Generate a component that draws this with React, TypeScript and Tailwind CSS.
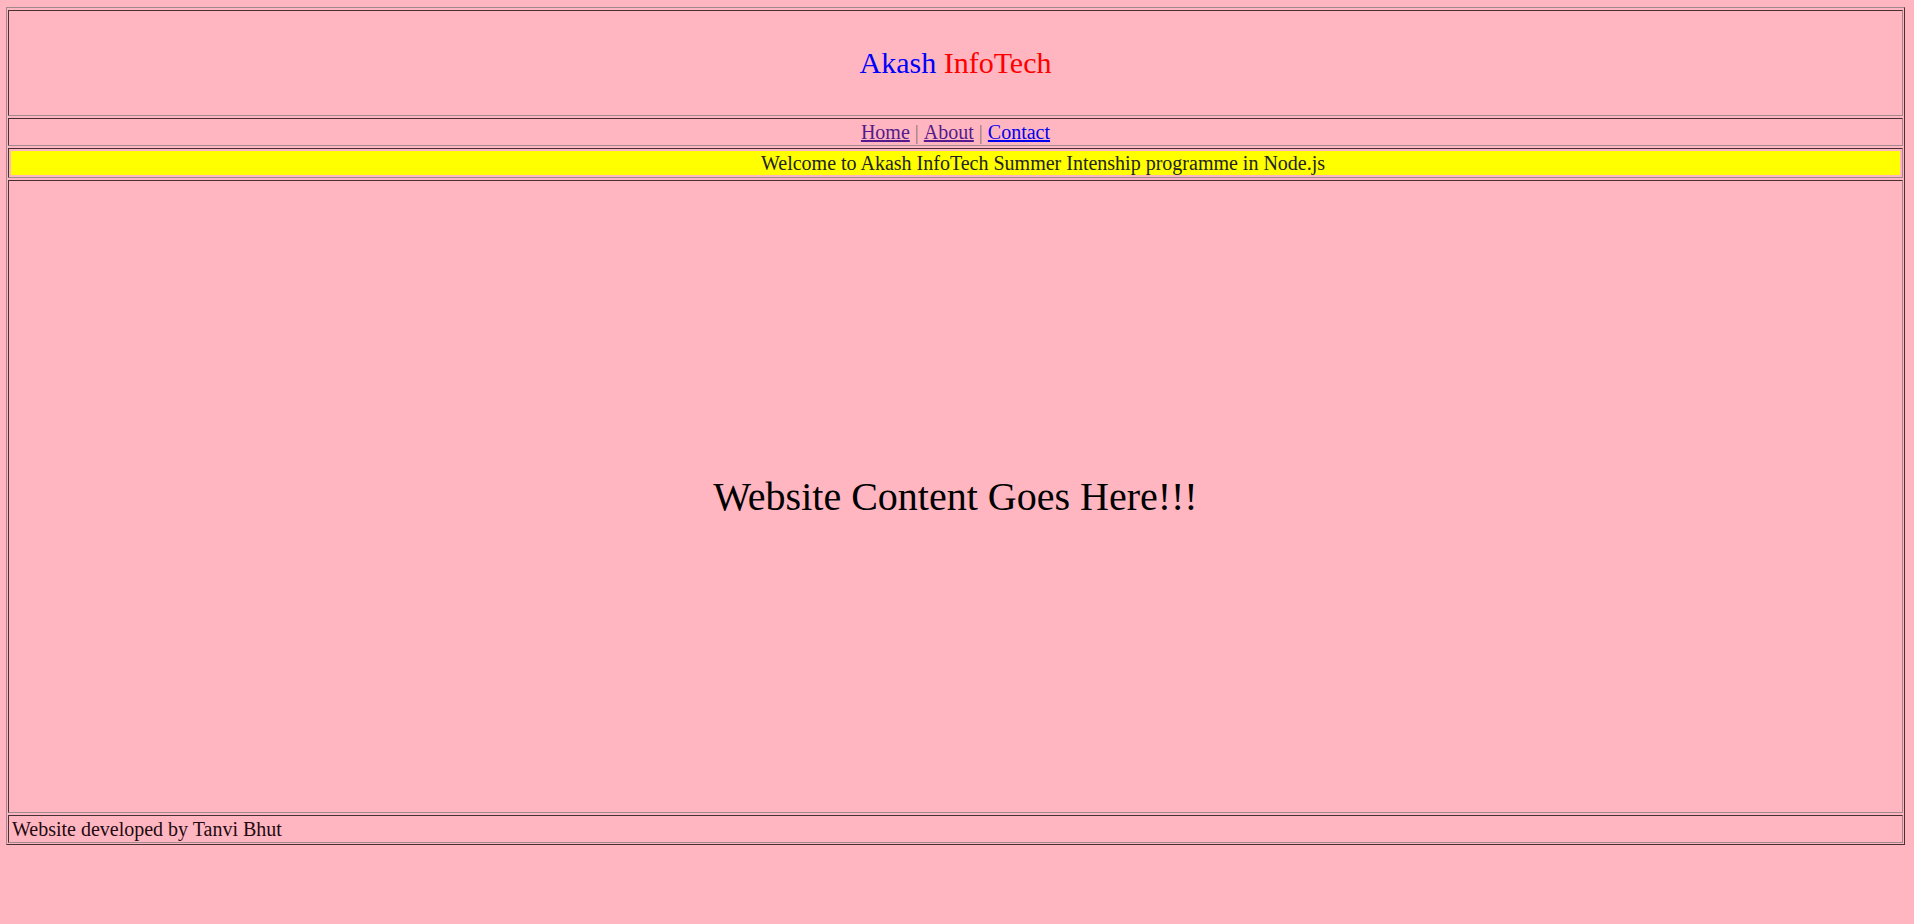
import React from "react";

const cell = "border border-t-[#4a3034] border-l-[#4a3034] border-b-[#a08a8d] border-r-[#a08a8d]";

const App: React.FC = () => {
  return (
    <div className="min-h-screen w-full bg-[#ffb6c1] pt-[7px] pl-[6px] text-black" style={{ fontFamily: '"Liberation Serif", "Times New Roman", serif' }}>
      <div className="flex w-[1899px] flex-col gap-[2px] border border-t-[#a08a8d] border-l-[#a08a8d] border-b-[#4a3034] border-r-[#4a3034] p-[1px] pt-[2px]">
        <div className={`${cell} flex h-[106px] items-center justify-center pb-[2px] text-[30px]`}>
          <span className="text-[#0000ff]">Akash</span>
          <span>&nbsp;</span>
          <span className="text-[#ff0000]">InfoTech</span>
        </div>
        <div className={`${cell} flex h-[28px] items-center justify-center text-[20px]`}>
          <a href="#" className="text-[#551a8b] underline">Home</a>
          <span className="text-[#8a7477]">&nbsp;|&nbsp;</span>
          <a href="#" className="text-[#551a8b] underline">About</a>
          <span className="text-[#8a7477]">&nbsp;|&nbsp;</span>
          <a href="#" className="text-[#0000ee] underline">Contact</a>
        </div>
        <div className={`${cell} h-[30px] p-[2px]`}>
          <div className="flex h-full items-center bg-[#ffff00] pl-[750px] text-[20px] leading-none whitespace-nowrap text-[#222]">
            Welcome to Akash InfoTech Summer Intenship programme in Node.js
          </div>
        </div>
        <div className={`${cell} flex h-[633px] items-center justify-center text-[40px]`}>
          Website Content Goes Here!!!
        </div>
        <div className={`${cell} flex h-[28px] items-center pl-[3px] text-[20px] text-[#220a10]`}>
          Website developed by Tanvi Bhut
        </div>
      </div>
    </div>
  );
};

export default App;
